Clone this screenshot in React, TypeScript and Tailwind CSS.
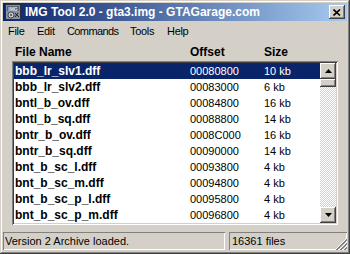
import React from 'react';

interface Entry { name: string; offset: string; size: string }

const entries: Entry[] = [
  { name: 'bbb_lr_slv1.dff',  offset: '00080800', size: '10 kb' },
  { name: 'bbb_lr_slv2.dff',  offset: '00083000', size: '6 kb' },
  { name: 'bntl_b_ov.dff',    offset: '00084800', size: '16 kb' },
  { name: 'bntl_b_sq.dff',    offset: '00088800', size: '14 kb' },
  { name: 'bntr_b_ov.dff',    offset: '0008C000', size: '16 kb' },
  { name: 'bntr_b_sq.dff',    offset: '00090000', size: '14 kb' },
  { name: 'bnt_b_sc_l.dff',   offset: '00093800', size: '4 kb' },
  { name: 'bnt_b_sc_m.dff',   offset: '00094800', size: '4 kb' },
  { name: 'bnt_b_sc_p_l.dff', offset: '00095800', size: '4 kb' },
  { name: 'bnt_b_sc_p_m.dff', offset: '00096800', size: '4 kb' },
];

const raised =
  'shadow-[inset_-1px_-1px_#404040,inset_1px_1px_#ffffff,inset_-2px_-2px_#808080,inset_2px_2px_#d4d0c8]';

function AppIcon() {
  return (
    <svg width="16" height="16" viewBox="0 0 16 16">
      <rect x="0.5" y="0.5" width="15" height="15" fill="#8a8f9c" stroke="#2a2f40" />
      <rect x="2" y="2" width="12" height="5" fill="#5a6070" />
      <text x="8" y="6.5" fontSize="5" fontWeight="bold" fill="#e8e8f0" textAnchor="middle" fontFamily="Liberation Sans, sans-serif">IMG</text>
      <circle cx="6" cy="11" r="3" fill="#c8ccd8" stroke="#2a2f40" strokeWidth="0.8" />
      <circle cx="6" cy="11" r="0.9" fill="#2a2f40" />
      <path d="M10 9 L14 13 M13 9 L10 13" stroke="#1a1f30" strokeWidth="1" />
    </svg>
  );
}

function ScrollButton({ up }: { up: boolean }) {
  return (
    <div className={`w-4 h-4 bg-[#d4d0c8] ${raised} flex items-center justify-center`}>
      <svg width="7" height="4" viewBox="0 0 7 4">
        {up ? <path d="M3.5 0 L7 4 L0 4 Z" fill="#000" /> : <path d="M0 0 L7 0 L3.5 4 Z" fill="#000" />}
      </svg>
    </div>
  );
}

export default function App() {
  return (
    <div
      className="w-[350px] h-[254px] bg-[#d4d0c8] p-[3px] flex flex-col text-black shadow-[inset_-1px_-1px_#404040,inset_1px_1px_#d4d0c8,inset_-2px_-2px_#808080,inset_2px_2px_#ffffff]"
      style={{ fontFamily: '"Liberation Sans", Arial, sans-serif' }}
    >
      {/* Title bar */}
      <div className="h-[18px] flex items-center pl-[2px] pr-[2px] bg-[linear-gradient(to_right,#0a246a,#a6caf0)]">
        <AppIcon />
        <span className="ml-[4px] text-white text-[12px] font-bold leading-none whitespace-nowrap">
          IMG Tool 2.0 - gta3.img - GTAGarage.com
        </span>
        <div className={`ml-auto w-4 h-[14px] bg-[#d4d0c8] ${raised} flex items-center justify-center`}>
          <svg width="8" height="7" viewBox="0 0 8 7">
            <path d="M0.5 0.5 L7 6.5 M7 0.5 L0.5 6.5" stroke="#000" strokeWidth="1.6" />
          </svg>
        </div>
      </div>

      {/* Menu */}
      <div className="h-[19px] flex items-center text-[11px] tracking-[-0.3px] leading-none pl-[5px] pt-[1px] whitespace-nowrap">
        <span className="w-[29px] shrink-0">File</span>
        <span className="w-[30px] shrink-0">Edit</span>
        <span className="w-[63px] shrink-0 tracking-[-0.6px]">Commands</span>
        <span className="w-[37px] shrink-0">Tools</span>
        <span>Help</span>
      </div>

      {/* Column headers */}
      <div className="h-[21px] flex items-center pt-[3px] text-[12px] font-bold leading-none">
        <span className="ml-[12px] w-[175px]">File Name</span>
        <span className="w-[74px]">Offset</span>
        <span>Size</span>
      </div>

      {/* List box */}
      <div className="ml-[9px] mr-[9px] h-[164px] p-[2px] bg-white flex shadow-[inset_1px_1px_#808080,inset_-1px_-1px_#ffffff,inset_2px_2px_#404040,inset_-2px_-2px_#d4d0c8]">
        <div className="flex-1 flex flex-col">
          {entries.map((e, i) => (
            <div
              key={e.name}
              className={`h-4 flex items-center leading-none ${i === 0 ? 'bg-[#0a246a] text-white' : ''}`}
            >
              <span className="pl-[1px] w-[176px] text-[12px] font-bold whitespace-nowrap">{e.name}</span>
              <span className="w-[74px] text-[11px]">{e.offset}</span>
              <span className="text-[11px]">{e.size}</span>
            </div>
          ))}
        </div>
        <div className="w-4 flex flex-col">
          <ScrollButton up />
          <div className={`h-2 bg-[#d4d0c8] ${raised}`} />
          <div className="flex-1 bg-[repeating-conic-gradient(#ffffff_0_25%,#d4d0c8_0_50%)] bg-[length:2px_2px]" />
          <ScrollButton up={false} />
        </div>
      </div>

      {/* Status bar */}
      <div className="mt-auto mb-[1px] h-[18px] flex gap-[4px] text-[11px] leading-none">
        <div className="w-[222px] flex items-center pl-[2px] shadow-[inset_1px_1px_#808080,inset_-1px_-1px_#ffffff]">
          Version 2 Archive loaded.
        </div>
        <div className="flex-1 relative flex items-center pl-[3px] shadow-[inset_1px_1px_#808080,inset_-1px_-1px_#ffffff]">
          16361 files
          <svg className="absolute right-0 bottom-0" width="12" height="12" viewBox="0 0 12 12">
            <path d="M11 1 L1 11 M11 5 L5 11 M11 9 L9 11" stroke="#ffffff" strokeWidth="1" />
            <path d="M12 1 L1 12 M12 2 L2 12 M12 5 L5 12 M12 6 L6 12 M12 9 L9 12 M12 10 L10 12" stroke="#808080" strokeWidth="1" />
          </svg>
        </div>
      </div>
    </div>
  );
}
